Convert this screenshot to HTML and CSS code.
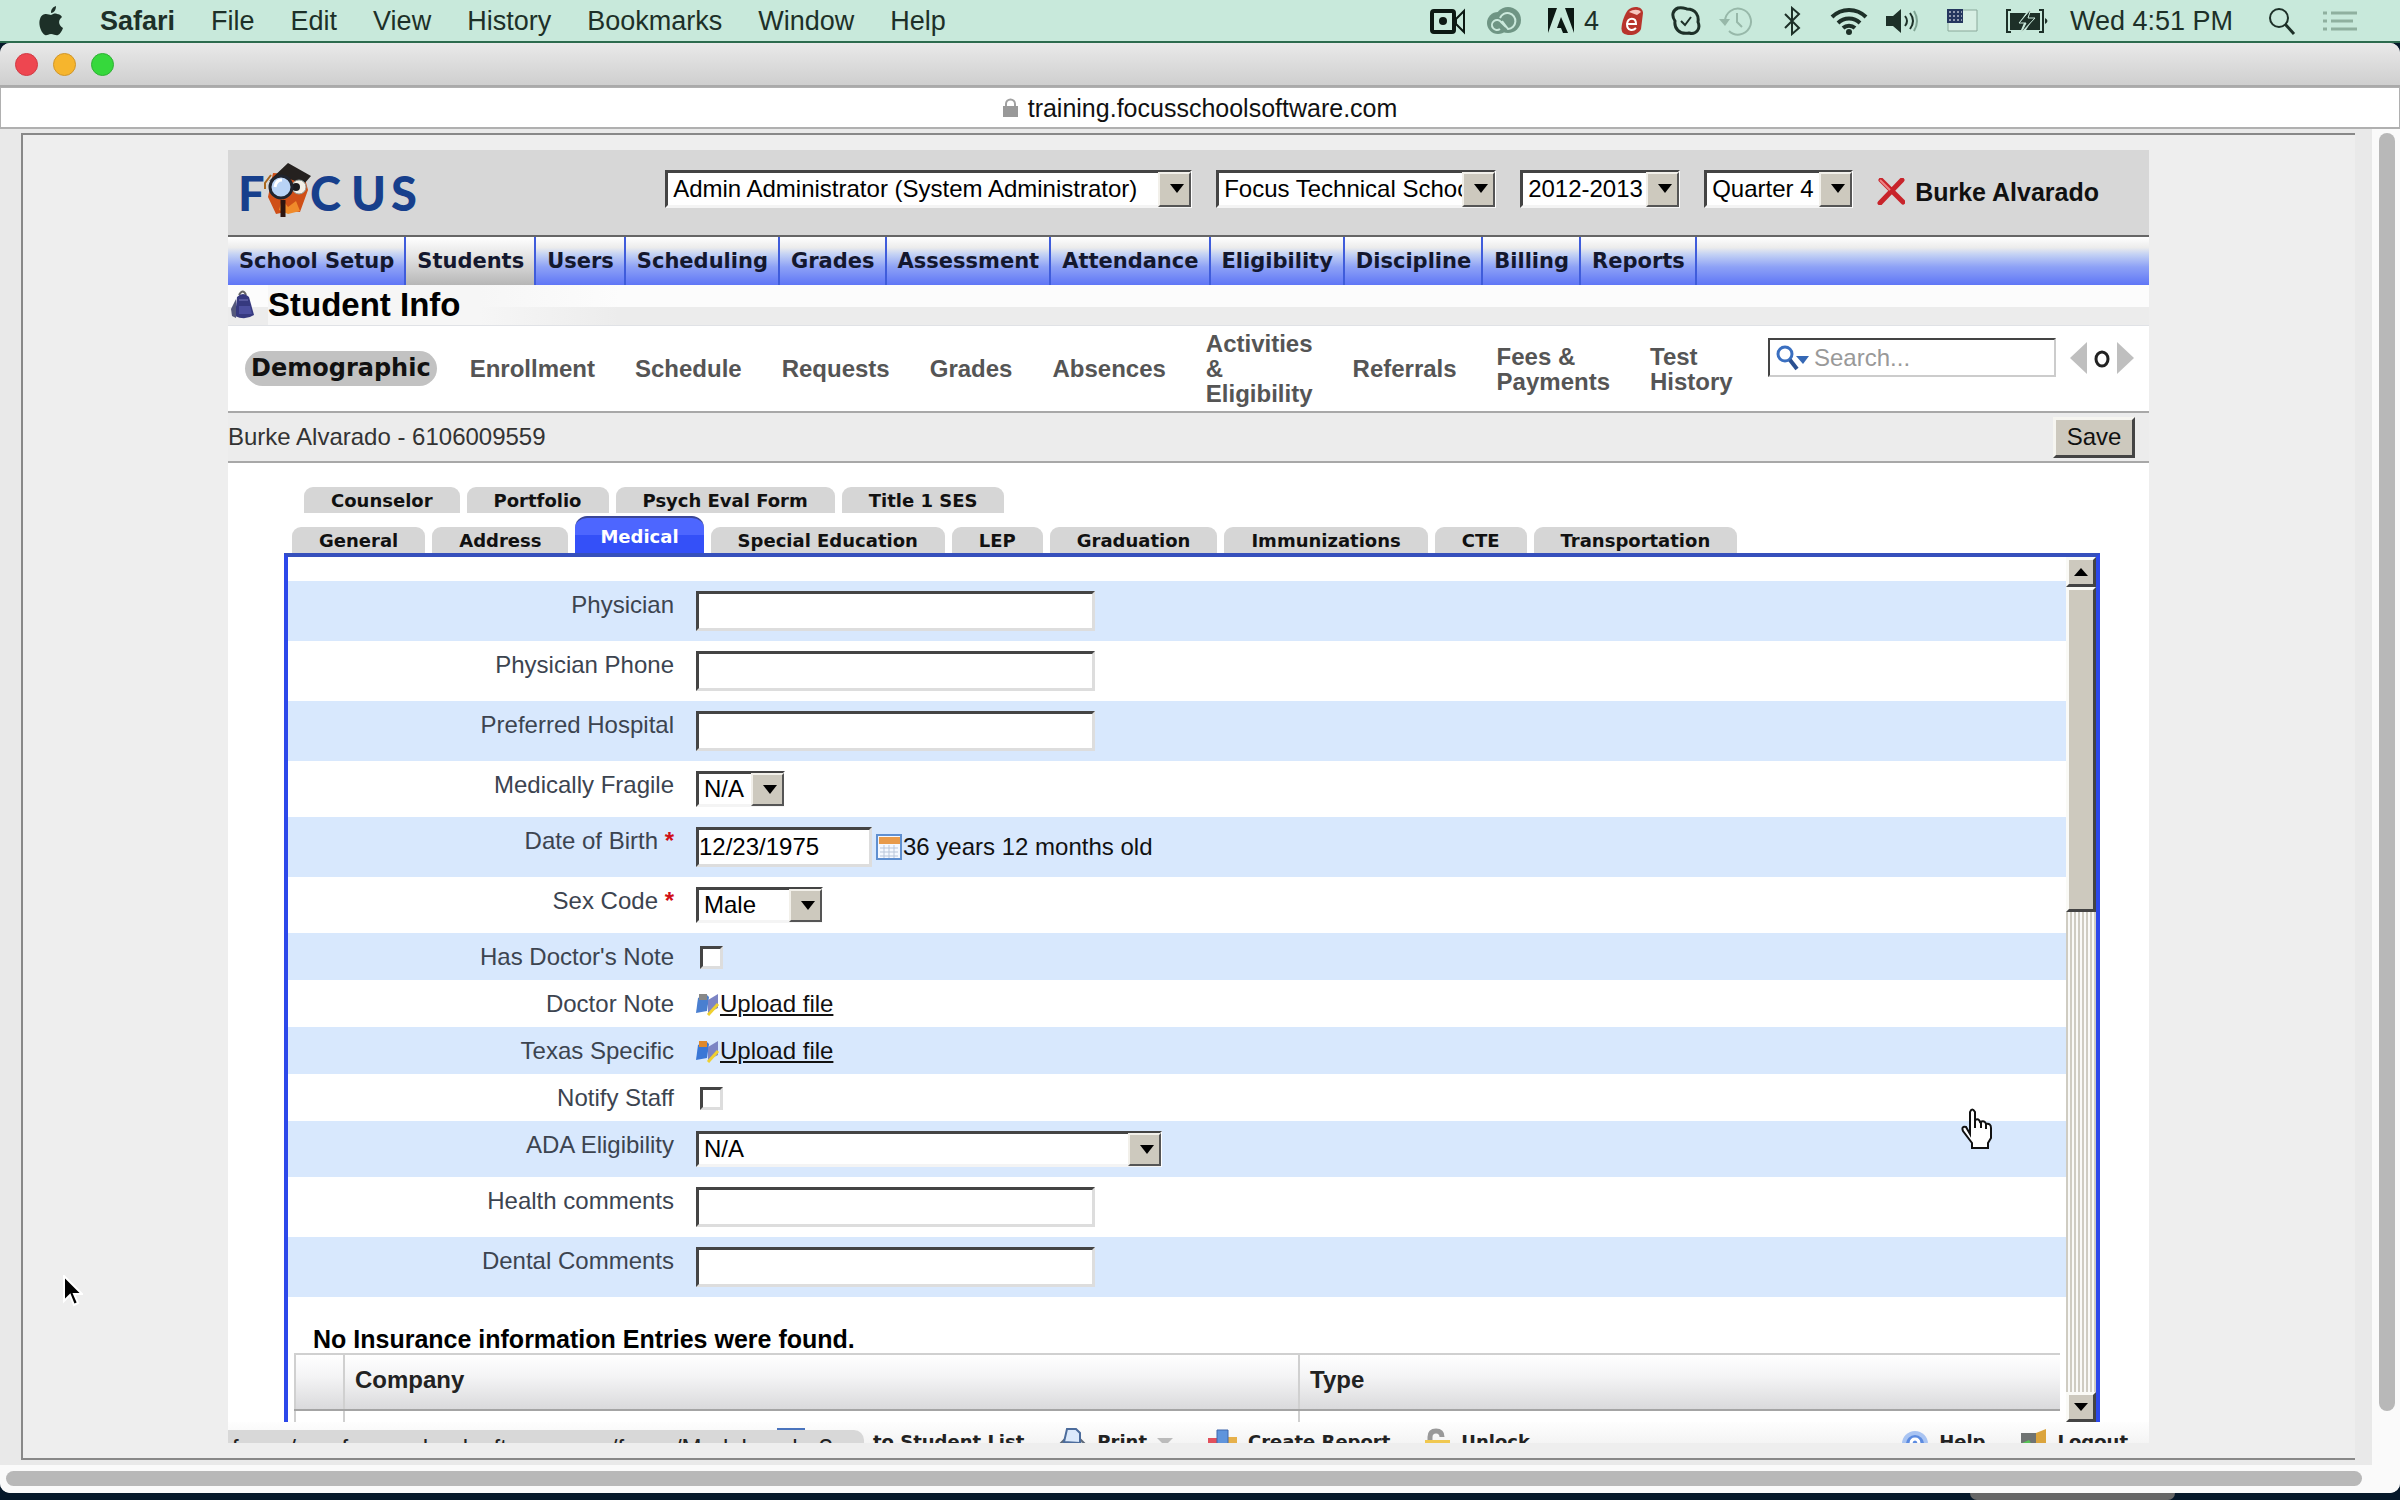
FILE: index.html
```
<!DOCTYPE html>
<html lang="en">
<head>
    <meta charset="UTF-8">
    <title>Student Info</title>
    <link rel="stylesheet" href="styles.css">
</head>
<body>
    <header class="menubar">
        <svg class="apple" width="24" height="30" viewBox="0 0 24 30"><path d="M12 9c2-1 4-2 6-1 2 0 4 1 5 3-4 3-4 8 1 11-1 3-3 6-5 7-2 1-4-1-7-1s-4 2-6 1C2 27-1 18 1 13c1-4 4-5 6-5s4 1 5 1zM12 7c0-4 2-6 5-7 0 4-2 7-5 7z" fill="#1d3028"/></svg>
        <nav class="menus">
            <b>Safari</b>
            <span>File</span>
            <span>Edit</span>
            <span>View</span>
            <span>History</span>
            <span>Bookmarks</span>
            <span>Window</span>
            <span>Help</span>
        </nav>
        <div class="status-icons">
            <svg width="38" height="28" viewBox="0 0 38 28"><rect x="2" y="4" width="22" height="21" rx="2" fill="none" stroke="#0c1813" stroke-width="4"/><circle cx="13" cy="14" r="4" fill="#0c1813"/><path d="M26 12l8-8v21l-8-8z" fill="none" stroke="#0c1813" stroke-width="2"/></svg>
            <svg width="44" height="28" viewBox="0 0 44 28"><circle cx="12" cy="16" r="11" fill="#6f9584"/><circle cx="22" cy="13" r="13" fill="#6f9584"/><path d="M20 20l-5-5a5 5 0 1 0-1 7M14 11a8 8 0 1 1 8 11l-6-8" fill="none" stroke="#cbe9dc" stroke-width="2"/></svg>
            <span class="adobe">
                <svg width="26" height="26" viewBox="0 0 26 26"><path d="M0 0h9L0 25zM17 0h9v25zM13 9l7 16h-5l-2-5H9z" fill="#0c1813"/></svg>
                4
            </span>
            <svg width="33" height="30" viewBox="0 0 33 30"><path d="M8 4c5-5 15-4 15 3l-2 16c-2 6-13 8-18 4-4-4 1-18 5-23z" fill="#b8342c"/><path d="M9 6c4-3 10-3 12 0l-4 3z" fill="#f6c7c0"/><path d="M7 18h9c0-7-8-7-9 0 0 7 6 7 9 4" fill="none" stroke="#fff" stroke-width="2"/></svg>
            <svg width="30" height="30" viewBox="0 0 30 30"><path d="M7 2c4-1 6 0 9 1 9 0 12 7 11 13 3 7-2 13-9 11C8 29 3 22 4 15 0 9 2 4 7 2z" fill="none" stroke="#1d3028" stroke-width="3"/><path d="M10 15l4 4 6-8" fill="none" stroke="#1d3028" stroke-width="2"/></svg>
            <svg width="46" height="30" viewBox="0 0 46 30"><path d="M6 15a13 13 0 1 1 4 10" fill="none" stroke="#97b8a9" stroke-width="2"/><path d="M0 13h11l-5 7z" fill="#97b8a9"/><path d="M18 7v9l5 5" fill="none" stroke="#97b8a9" stroke-width="2"/></svg>
            <svg width="29" height="30" viewBox="0 0 29 30"><path d="M2 8l14 14-7 6V2l7 6L2 22" fill="none" stroke="#1d3028" stroke-width="2"/></svg>
            <svg width="38" height="30" viewBox="0 0 38 30"><path d="M2 11a24 24 0 0 1 34 0M8 17a16 16 0 0 1 22 0M13 22a9 9 0 0 1 12 0" fill="none" stroke="#1d3028" stroke-width="4"/><circle cx="19" cy="26" r="3" fill="#1d3028"/></svg>
            <svg width="43" height="28" viewBox="0 0 43 28"><path d="M0 9h7l8-7v24l-8-7H0z" fill="#1d3028"/><path d="M19 9q4 5 0 10M24 6q6 8 0 16" fill="none" stroke="#1d3028" stroke-width="2"/><path d="M28 4q6 10 0 20" fill="none" stroke="#7fa493" stroke-width="2"/></svg>
            <svg width="40" height="24" viewBox="0 0 40 24"><path d="M1 1h29v21H1z" fill="#d8efe4" stroke="#8aa99b"/><path d="M0 0h16v14H0z" fill="#24365e"/><path d="M2 3h13M2 7h13M2 11h13" stroke="#fff" stroke-dasharray="2 2"/></svg>
            <svg width="47" height="26" viewBox="0 0 47 26"><path d="M6 2H2v22h4M34 2h4v22h-4" fill="none" stroke="#1d3028" stroke-width="2"/><path d="M5 5h16l-7 10h5l-3 7H5zM24 5h11v17H21l7-11h-5z" fill="#1d3028"/><path d="M26 1L14 15h7l-5 10 14-15h-7z" fill="#1d3028" stroke="#cbe9dc"/><path d="M40 10q5 3 0 6z" fill="#1d3028"/></svg>
            <span class="clock">Wed 4:51 PM</span>
            <svg width="37" height="28" viewBox="0 0 37 28"><circle cx="11" cy="11" r="9" fill="none" stroke="#1d3028" stroke-width="2"/><path d="M17 17l9 10" stroke="#1d3028" stroke-width="3"/></svg>
            <svg width="34" height="22" viewBox="0 0 34 22"><path d="M0 3h4M8 3h26M0 11h4M8 11h22M0 19h4M8 19h26" stroke="#8fb09f" stroke-width="3"/></svg>
        </div>
    </header>

    <div class="window">
        <div class="titlebar">
            <span class="light red"></span>
            <span class="light yellow"></span>
            <span class="light green"></span>
        </div>
        <div class="urlbar">
            <svg width="15" height="19" viewBox="0 0 15 19"><path d="M3 9V6a4 4 0 0 1 9 0v3" fill="none" stroke="#a0a0a0" stroke-width="2"/><path d="M0 8h15v11H0z" fill="#999"/></svg>
            training.focusschoolsoftware.com
        </div>
        <div class="viewport">
            <div class="frame">
                <div class="page">
                    <div class="top">
                        <svg class="logo" width="185" height="66" viewBox="0 0 185 66">
                            <text class="logo-text" x="1" y="55">F</text>
                            <path d="M36 17l-5 24 8 17 14-3 10 1 8-22-4-15z" fill="#cf4f17"/>
                            <path d="M45 43l6 8 8-6 4 10-12 3-9-4z" fill="#f08a2a"/>
                            <path d="M51 7l23 13-7 8-20-7-15 4z" fill="#25211f"/>
                            <path d="M34 19l-6 8v6" fill="none" stroke="#a9671d" stroke-width="2"/>
                            <circle cx="62" cy="31" r="7" fill="#f4efe6" stroke="#8e9c9a"/>
                            <circle cx="59" cy="31" r="4" fill="#1b1b1f"/>
                            <path d="M46 44v17" stroke="#2d1510" stroke-width="5"/>
                            <circle cx="44" cy="31" r="11" fill="#b9d3f5" stroke="#20242e" stroke-width="3"/>
                            <path d="M38 31q1-7 7-7" fill="none" stroke="#fff" stroke-width="3"/>
                            <text class="logo-text" x="73 114 154" y="55">CUS</text>
                        </svg>
                        <div class="pickers">
                            <span class="select w-user"><select aria-label="User"><option>Admin Administrator (System Administrator)</option></select></span>
                            <span class="select w-school"><select aria-label="School"><option>Focus Technical School</option></select></span>
                            <span class="select w-year"><select aria-label="Year"><option>2012-2013</option></select></span>
                            <span class="select w-quarter"><select aria-label="Quarter"><option>Quarter 4</option></select></span>
                            <span class="current">
                                <svg width="28" height="27" viewBox="0 0 28 27"><path d="M4 2l22 22M25 2L3 25" stroke="#c8242b" stroke-width="5" stroke-linecap="round"/><path d="M3 2l10 10" stroke="#ee8585" stroke-width="2"/></svg>
                                Burke Alvarado
                            </span>
                        </div>
                    </div>

                    <nav class="mainnav">
                        <a href="#">School Setup</a>
                        <a href="#" class="active">Students</a>
                        <a href="#">Users</a>
                        <a href="#">Scheduling</a>
                        <a href="#">Grades</a>
                        <a href="#">Assessment</a>
                        <a href="#">Attendance</a>
                        <a href="#">Eligibility</a>
                        <a href="#">Discipline</a>
                        <a href="#">Billing</a>
                        <a href="#">Reports</a>
                    </nav>

                    <div class="title">
                        <svg width="25" height="30" viewBox="0 0 25 30"><path d="M9 5q4-7 7 0" fill="none" stroke="#666" stroke-width="2"/><path d="M7 7q6-6 12 0l5 18q-9 6-19 1z" fill="#36397f"/><path d="M6 9L1 19l1 7 4 2z" fill="#55597c"/><path d="M9 16h11l2 8H9z" fill="#4b4e9e"/><path d="M9 10h9" stroke="#7779bd"/></svg>
                        <h1>Student Info</h1>
                    </div>

                    <div class="subnav">
                        <a href="#" class="active">Demographic</a>
                        <a href="#">Enrollment</a>
                        <a href="#">Schedule</a>
                        <a href="#">Requests</a>
                        <a href="#">Grades</a>
                        <a href="#">Absences</a>
                        <a href="#">Activities<br>&amp;<br>Eligibility</a>
                        <a href="#">Referrals</a>
                        <a href="#">Fees &amp;<br>Payments</a>
                        <a href="#">Test<br>History</a>
                        <div class="finder">
                            <div class="search">
                                <svg width="34" height="28" viewBox="0 0 34 28"><circle cx="9" cy="10" r="7" fill="#fff" stroke="#3a6fc0" stroke-width="3"/><path d="M14 16l7 9" stroke="#2b5090" stroke-width="4"/><path d="M20 12h13l-6 8z" fill="#3568b5"/></svg>
                                <input type="text" class="search-box" placeholder="Search..." aria-label="Search">
                            </div>
                            <svg width="64" height="34" viewBox="0 0 64 34"><path d="M17 1v32L0 17zM47 1v32l17-16z" fill="#bfbfbf"/><ellipse cx="32" cy="18" rx="6" ry="7" fill="none" stroke="#222" stroke-width="3"/></svg>
                        </div>
                    </div>

                    <div class="student">
                        <span>Burke Alvarado - 6106009559</span>
                        <button type="button" class="save">Save</button>
                    </div>

                    <div class="tabs upper">
                        <a href="#">Counselor</a>
                        <a href="#">Portfolio</a>
                        <a href="#">Psych Eval Form</a>
                        <a href="#">Title 1 SES</a>
                    </div>
                    <div class="tabs lower">
                        <a href="#">General</a>
                        <a href="#">Address</a>
                        <a href="#" class="active">Medical</a>
                        <a href="#">Special Education</a>
                        <a href="#">LEP</a>
                        <a href="#">Graduation</a>
                        <a href="#">Immunizations</a>
                        <a href="#">CTE</a>
                        <a href="#">Transportation</a>
                    </div>

                    <div class="panel">
                        <form class="content">
                            <div class="row"><label for="physician">Physician</label><div><input type="text" id="physician" class="text"></div></div>
                            <div class="row"><label for="phone">Physician Phone</label><div><input type="text" id="phone" class="text"></div></div>
                            <div class="row"><label for="hospital">Preferred Hospital</label><div><input type="text" id="hospital" class="text"></div></div>
                            <div class="row"><label for="fragile">Medically Fragile</label><div><span class="select w-fragile"><select id="fragile"><option>N/A</option></select></span></div></div>
                            <div class="row">
                                <label for="dob">Date of Birth <em>*</em></label>
                                <div>
                                    <input type="text" id="dob" class="text date" value="12/23/1975">
                                    <svg width="28" height="27" viewBox="0 0 28 27"><path d="M2 1h24v24H2z" fill="#f4f8ff" stroke="#5f8fd0" stroke-width="2"/><path d="M4 3h21v7H4z" fill="#e89a4a"/><path d="M5 14h18M5 18h18M5 22h18M9 11v13M14 11v13M19 11v13" stroke="#b9c6da"/></svg>
                                    <span class="age">36 years 12 months old</span>
                                </div>
                            </div>
                            <div class="row"><label for="sex">Sex Code <em>*</em></label><div><span class="select w-sex"><select id="sex"><option>Male</option></select></span></div></div>
                            <div class="row short"><label for="note">Has Doctor's Note</label><div><input type="checkbox" id="note" class="check"></div></div>
                            <div class="row short">
                                <span class="label">Doctor Note</span>
                                <div>
                                    <svg width="24" height="24" viewBox="0 0 24 24"><path d="M2 6l8-4 3 3-2 14-11 2z" fill="#4a7fd0"/><path d="M3 2h8v6H3z" fill="#888"/><path d="M12 8l10-6v14l-10 5z" fill="#7c84c4"/><path d="M22 12L12 23" stroke="#f0d030" stroke-width="3"/></svg>
                                    <a href="#">Upload file</a>
                                </div>
                            </div>
                            <div class="row short">
                                <span class="label">Texas Specific</span>
                                <div>
                                    <svg width="24" height="24" viewBox="0 0 24 24"><path d="M2 6l8-4 3 3-2 14-11 2z" fill="#3a77d6"/><path d="M3 2h8v6H3z" fill="#e0892c"/><path d="M12 8l10-6v14l-10 5z" fill="#7c84c4"/><path d="M22 12L12 23" stroke="#f0d030" stroke-width="3"/></svg>
                                    <a href="#">Upload file</a>
                                </div>
                            </div>
                            <div class="row short"><label for="notify">Notify Staff</label><div><input type="checkbox" id="notify" class="check"></div></div>
                            <div class="row"><label for="ada">ADA Eligibility</label><div><span class="select w-ada"><select id="ada"><option>N/A</option></select></span></div></div>
                            <div class="row"><label for="health">Health comments</label><div><input type="text" id="health" class="text"></div></div>
                            <div class="row"><label for="dental">Dental Comments</label><div><input type="text" id="dental" class="text"></div></div>

                            <table class="entries">
                                <caption>No Insurance information Entries were found.</caption>
                                <thead>
                                    <tr><th class="narrow"></th><th class="company">Company</th><th>Type</th></tr>
                                </thead>
                                <tbody>
                                    <tr><td></td><td></td><td></td></tr>
                                </tbody>
                            </table>
                        </form>
                        <div class="scroll">
                            <span class="scroll-btn"><svg width="14" height="8" viewBox="0 0 14 8"><path d="M0 8h14L7 0z"/></svg></span>
                            <span class="scroll-thumb"></span>
                            <span class="scroll-btn down"><svg width="14" height="8" viewBox="0 0 14 8"><path d="M0 0h14L7 8z"/></svg></span>
                        </div>
                    </div>

                    <footer class="toolbar">
                        <a href="#" class="back">
                            <svg width="28" height="28" viewBox="0 0 28 28"><path d="M1 1h26v22H1z" fill="#fff" stroke="#4a74bd" stroke-width="2"/></svg>
                            to Student List
                        </a>
                        <a href="#">
                            <svg width="29" height="28" viewBox="0 0 29 28"><path d="M2 16l5-5h15l5 5v9H2z" fill="#bcc3cc" stroke="#5d6878" stroke-width="2"/><path d="M6 14L9 1h9l4 4v10z" fill="#dbe9fb" stroke="#4c6c9c" stroke-width="2"/></svg>
                            Print
                            <svg class="caret" width="16" height="8" viewBox="0 0 16 8"><path d="M0 0h16L8 8z" fill="#bbb"/></svg>
                        </a>
                        <a href="#">
                            <svg width="31" height="28" viewBox="0 0 31 28"><path d="M1 10h10v17H1z" fill="#e2505c"/><path d="M20 9h10v18H20z" fill="#e6b04a"/><path d="M10 2h11v25H10z" fill="#5f94dc" stroke="#3f67ac"/></svg>
                            Create Report
                        </a>
                        <a href="#">
                            <svg width="27" height="28" viewBox="0 0 27 28"><path d="M6 14V9q0-6 6-6t6 6" fill="none" stroke="#999" stroke-width="5"/><path d="M1 12h25v15H1z" fill="#f0c850"/></svg>
                            Unlock
                        </a>
                        <a href="#" class="right">
                            <svg width="28" height="28" viewBox="0 0 28 28"><circle cx="14" cy="16" r="13" fill="#a9c4f2"/><circle cx="14" cy="16" r="9" fill="#5c8be0"/><path d="M10 16q0-5 4-5t4 5" fill="none" stroke="#fff" stroke-width="3"/></svg>
                            Help
                        </a>
                        <a href="#">
                            <svg width="28" height="28" viewBox="0 0 28 28"><path d="M2 5h15v20H2z" fill="#6f7372"/><path d="M1 16l9-4 5 8z" fill="#56c456"/><path d="M17 5l10-4v26l-10-3z" fill="#dba43c"/></svg>
                            Logout
                        </a>
                        <div class="statusline">focus/see.focusschoolsoftware.com/focus/Modules.php?m</div>
                    </footer>
                </div>
            </div>
            <div class="vbar"><span></span></div>
            <div class="hbar"><span></span></div>
        </div>
    </div>

    <div class="dock"></div>
    <svg class="cursor arrow" width="20" height="32" viewBox="0 0 20 32"><path d="M1 1v25l6-6 4 10 4-2-4-9h8z" fill="#000" stroke="#fff" stroke-width="2"/></svg>
    <svg class="cursor hand" width="32" height="42" viewBox="0 0 32 42"><path d="M9 26V4q2-5 5 0v8q4-2 5 2 5-2 6 2 5-1 5 4v10l-3 5v5H11v-5L2 23q-2-5 3-4z" fill="#fff" stroke="#111" stroke-width="2"/><path d="M14 12v8M20 14v6M25 16v5" stroke="#111" stroke-width="2"/></svg>
</body>
</html>
```

FILE: styles.css
```
*{
    box-sizing: border-box;
}
html, body{
    height: 100%;
    margin: 0;
}
body{
    display: flex;
    flex-direction: column;
    padding-bottom: 7px;
    overflow: hidden;
    position: relative;
    background-color: #06182a;
    font-family: "Liberation Sans", Arial, sans-serif;
    font-size: 24px;
    line-height: 28px;
    color: #333;
}
a{
    color: inherit;
    text-decoration: none;
}
svg{
    flex: none;
}

/* system menu bar */
.menubar{
    display: flex;
    align-items: center;
    height: 43px;
    flex: none;
    padding: 0 43px 0 39px;
    background-color: #c8e9db;
    border-bottom: 2px solid #2c6b4e;
    font-size: 27px;
    color: #1d3028;
}
.menus{
    display: flex;
    gap: 36px;
    margin-left: 37px;
}
.status-icons{
    display: flex;
    align-items: center;
    gap: 18px;
    margin-left: auto;
}
.adobe{
    display: flex;
    align-items: center;
    gap: 10px;
    width: 54px;
}
.clock{
    padding-right: 17px;
    white-space: nowrap;
}

/* browser window */
.window{
    flex: 1;
    min-height: 0;
    display: flex;
    flex-direction: column;
    border-radius: 10px;
    overflow: hidden;
    background-color: #e9e9e9;
}
.titlebar{
    display: flex;
    align-items: center;
    gap: 15px;
    flex: none;
    height: 44px;
    padding-left: 15px;
    background: linear-gradient(#e9e9e9, #cfcfcf);
    border-bottom: 2px solid #aaa;
}
.light{
    width: 23px;
    height: 23px;
    border-radius: 50%;
    border: 1px solid;
}
.red{ background-color: #ee4650; border-color: #d03a44; }
.yellow{ background-color: #f6b52d; border-color: #cf952a; }
.green{ background-color: #36d83c; border-color: #2fb035; }
.urlbar{
    display: flex;
    align-items: center;
    justify-content: center;
    gap: 10px;
    flex: none;
    height: 42px;
    background-color: #fff;
    border: 1px solid #b0b0b0;
    border-bottom-width: 2px;
    font-size: 25px;
    color: #111;
}
.viewport{
    flex: 1;
    min-height: 0;
    display: grid;
    grid-template-columns: minmax(0, 1fr) 28px;
    grid-template-rows: minmax(0, 1fr) 28px;
}
.frame{
    margin: 4px 17px 5px 21px;
    padding: 15px 206px 15px 205px;
    background-color: #eee;
    border: solid #888;
    border-width: 2px 0 2px 2px;
}
.vbar, .hbar{
    display: flex;
    background-color: #fafafa;
}
.vbar{
    padding: 4px 5px 54px 7px;
}
.hbar{
    grid-column: 1 / 3;
    padding: 6px 38px 7px 6px;
}
.vbar span, .hbar span{
    flex: 1;
    border-radius: 8px;
    background-color: #b8b8b8;
}

/* application page */
.page{
    height: 100%;
    display: flex;
    flex-direction: column;
    background-color: #fff;
}
.page > *{
    flex: none;
}
.top{
    display: flex;
    align-items: center;
    justify-content: space-between;
    height: 85px;
    padding: 0 50px 8px 9px;
    background-color: #d7d7d7;
}
.logo-text{
    font-family: Lato, sans-serif;
    font-size: 47px;
    font-weight: 900;
    fill: #173f8c;
}
.pickers{
    display: flex;
    align-items: center;
    gap: 24px;
}
.current{
    display: flex;
    align-items: center;
    gap: 10px;
    padding-top: 6px;
    font-weight: bold;
    font-size: 25px;
    color: #111;
    white-space: nowrap;
}

/* old style bevelled controls */
.select{
    display: inline-flex;
    position: relative;
    height: 36px;
}
.select select{
    appearance: none;
    width: 100%;
    padding: 0 28px 0 5px;
    border: 3px solid;
    border-color: #444 #fff #f4f4f4 #444;
    border-radius: 0;
    background-color: #fff;
    font: inherit;
    color: #000;
}
.select:after{
    content: "";
    position: absolute;
    top: 2px;
    right: 1px;
    bottom: 1px;
    width: 29px;
    pointer-events: none;
    border: 2px solid;
    border-color: #f2f0ea #555 #555 #f2f0ea;
    background: #cdc9be;
}
.select:before{
    content: "";
    position: absolute;
    z-index: 1;
    top: 14px;
    right: 8px;
    pointer-events: none;
    border: 7px solid transparent;
    border-top: 9px solid #000;
    border-bottom: 0;
}
.pickers .select{
    height: 38px;
}
.w-user{ width: 527px; }
.w-school{ width: 280px; }
.w-year{ width: 160px; }
.w-quarter{ width: 149px; }
.w-fragile{ width: 89px; }
.w-sex{ width: 127px; }
.w-ada{ width: 466px; }

.mainnav{
    display: flex;
    height: 50px;
    border-top: 2px solid #666;
    background: linear-gradient(#fff, #ececec 22%, #c4d2f4 36%, #8ea2f6 62%, #5f76f6);
    font: bold 21px/48px "DejaVu Sans", Verdana, sans-serif;
    color: #14182e;
}
.mainnav a{
    padding: 0 10px 0 11px;
    border-right: 2px solid #3f5cdb;
}
.mainnav .active{
    background: linear-gradient(#fff, #e4e4e4 40%, #b6b6b6);
}
.title{
    display: flex;
    align-items: center;
    gap: 13px;
    height: 41px;
    padding-left: 2px;
    background: linear-gradient(#fcfcfc 22px, #ececec 22px);
    border-bottom: 1px solid #e0e2e6;
}
.title h1{
    margin: 0;
    padding-right: 160px;
    background: linear-gradient(90deg, #f6f6f6 60%, transparent);
    font-size: 33px;
    line-height: 40px;
    color: #000;
}
.subnav{
    display: flex;
    align-items: center;
    gap: 26px;
    height: 87px;
    padding: 0 15px 0 17px;
    border-bottom: 2px solid #a8a8a8;
    font-weight: bold;
    line-height: 25px;
    color: #555;
    white-space: nowrap;
}
.subnav a{
    padding: 0 7px;
}
.subnav .active{
    padding: 0 6px;
    border-radius: 18px;
    background-color: #c2c2c2;
    font: bold 24px/35px "DejaVu Sans", Verdana, sans-serif;
    color: #111;
}
.finder{
    display: flex;
    align-items: center;
    gap: 14px;
    margin-left: auto;
    padding-bottom: 22px;
}
.search{
    display: flex;
    align-items: center;
    gap: 4px;
    width: 288px;
    height: 39px;
    padding-left: 6px;
    border: 2px solid;
    border-color: #444 #ccc #ccc #444;
    background-color: #fff;
}
.search-box{
    flex: 1;
    min-width: 0;
    border: 0;
    padding: 0;
    background: none;
    font: 24px "Liberation Sans", Arial, sans-serif;
}
.search-box::placeholder{
    color: #999;
}
.student{
    display: flex;
    align-items: center;
    justify-content: space-between;
    height: 50px;
    padding-right: 14px;
    background-color: #ececec;
    border-bottom: 2px solid #a8a8a8;
}
.save{
    width: 82px;
    height: 41px;
    padding: 0;
    border: 3px solid;
    border-color: #f6f5f0 #444 #444 #f6f5f0;
    background-color: #cdc9be;
    font: inherit;
    color: #111;
}

/* tabs */
.tabs{
    display: flex;
    align-items: flex-end;
    gap: 7px;
    font: bold 18px/24px "DejaVu Sans", Verdana, sans-serif;
    color: #111;
}
.tabs a{
    height: 26px;
    padding: 2px 27px 0;
    border-radius: 9px 9px 0 0;
    background-color: #d6d6d6;
}
.tabs .active{
    height: 37px;
    padding: 7px 25px 0;
    border-top: 2px solid #3a4696;
    border-radius: 12px 12px 0 0;
    background: linear-gradient(#4d66ff 50%, #3450f8 50%);
    color: #fff;
}
.upper{
    margin: 24px 0 0 76px;
}
.lower{
    margin: 3px 0 0 64px;
}

.page > .panel{
    flex: 1;
    min-height: 0;
    display: flex;
    margin: 0 49px 0 56px;
    overflow: hidden;
    border: 4px solid #2c48ea;
    border-top-color: #3650bc;
    border-bottom: 0;
}
.content{
    flex: 1;
    padding-top: 24px;
}
.row{
    display: grid;
    grid-template-columns: 386px 1fr;
    gap: 22px;
    padding: 10px 0;
}
.row:nth-child(odd){
    background-color: #d8e8fd;
}
.row > :first-child{
    text-align: right;
    color: #3c4450;
}
.row > div{
    display: flex;
    align-items: center;
}
.row em{
    font-weight: bold;
    font-style: normal;
    color: #d01018;
}
.short{
    height: 47px;
}
.short a{
    color: #111;
    text-decoration: underline;
}
.text{
    width: 399px;
    height: 40px;
    padding: 0 4px;
    border: 3px solid;
    border-color: #444 #ddd #ddd #444;
    background-color: #fff;
    font: inherit;
    color: #000;
}
.date{
    width: 176px;
    margin-right: 3px;
    padding: 0;
}
.age{
    color: #111;
}
.check{
    appearance: none;
    width: 23px;
    height: 23px;
    margin: 0 4px;
    border: 3px solid;
    border-color: #444 #ddd #ddd #444;
    background-color: #fff;
}

.entries{
    width: calc(100% - 12px);
    margin: 28px 6px 0;
    table-layout: fixed;
    border-collapse: collapse;
    color: #222;
}
.entries caption{
    padding-left: 19px;
    text-align: left;
    font-size: 25px;
    font-weight: bold;
    color: #000;
}
.entries th{
    height: 56px;
    padding: 0 10px 4px;
    text-align: left;
    border: 1px solid #d0d0d0;
    border-width: 2px 0 2px 2px;
    border-bottom-color: #a4a4a4;
    background: linear-gradient(#fff, #f4f4f5 40%, #dadadc);
}
.entries td{
    height: 40px;
    border-left: 2px solid #d0d0d0;
}
.entries .narrow{ width: 49px; }
.entries .company{ width: 955px; }

/* inner scroll bar */
.scroll{
    display: flex;
    flex-direction: column;
    flex: none;
    width: 30px;
    background: repeating-linear-gradient(90deg, #cfccc2 0 2px, #fafaf8 2px 4px);
}
.scroll-btn, .scroll-thumb{
    display: flex;
    align-items: center;
    justify-content: center;
    height: 30px;
    border: 3px solid;
    border-color: #fafaf6 #444 #444 #fafaf6;
    background-color: #cdc9be;
}
.scroll-thumb{
    height: 325px;
}
.down{
    margin-top: auto;
}

/* bottom toolbar, cut off by the window */
.toolbar{
    display: flex;
    gap: 34px;
    height: 21px;
    padding: 0 21px 0 549px;
    overflow: hidden;
    position: relative;
    background: linear-gradient(#fefefe, #f4f4f4);
    font: bold 18px/40px "DejaVu Sans", Verdana, sans-serif;
    color: #222;
    white-space: nowrap;
}
.toolbar a{
    display: flex;
    align-items: center;
    gap: 10px;
    height: 40px;
}
.toolbar .back{
    gap: 68px;
}
.toolbar .right{
    margin-left: auto;
}
.statusline{
    position: absolute;
    left: 0;
    top: 8px;
    width: 636px;
    height: 36px;
    padding-left: 4px;
    overflow: hidden;
    border-top-right-radius: 10px;
    background-color: #d8d8d8;
    font: 24px/36px "Liberation Sans", Arial, sans-serif;
}

/* things floating over the desktop */
.dock{
    position: absolute;
    right: 225px;
    bottom: 0;
    width: 205px;
    height: 7px;
    border-radius: 0 0 8px 8px;
    background-color: #666;
}
.cursor{
    position: absolute;
}
.arrow{
    left: 63px;
    top: 1275px;
}
.hand{
    left: 1961px;
    top: 1108px;
}
```
